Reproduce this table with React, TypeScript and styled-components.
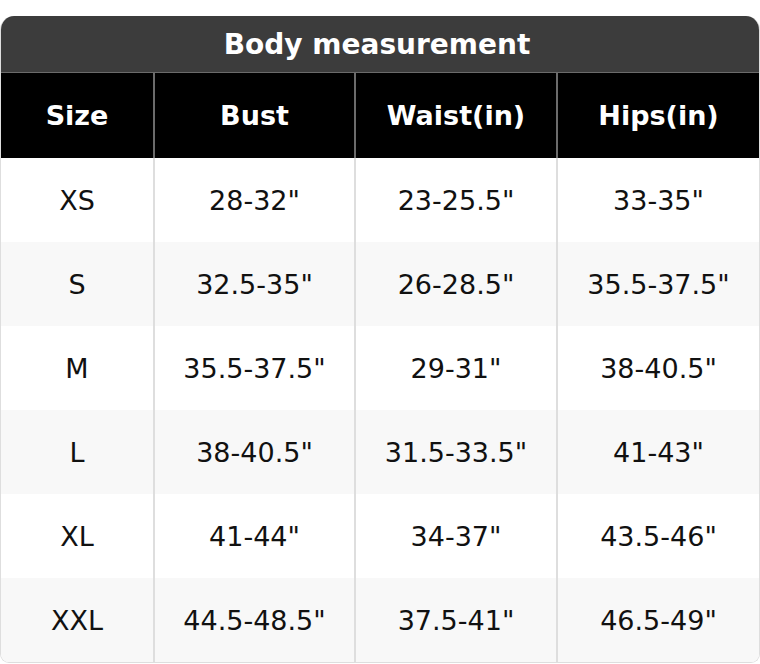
import React from "react";
import styled, { createGlobalStyle } from "styled-components";

const GlobalStyle = createGlobalStyle`
  html, body {
    margin: 0;
    padding: 0;
    background: #fff;
  }

  body {
    font-family: "DejaVu Sans", "Liberation Sans", sans-serif;
  }
`;

const Page = styled.div`
  width: 760px;
  padding-top: 16px;
`;

const Card = styled.div`
  border: 1px solid #dedede;
  border-top: none;
  border-radius: 14px 14px 9px 9px;
  overflow: hidden;
  background: #fff;
`;

const Title = styled.div`
  height: 56px;
  display: flex;
  align-items: center;
  justify-content: center;
  padding-right: 6px;

  background: #3c3c3c;
  border-bottom: 1px solid #6b6b6b;

  color: #fff;
  font-size: 28px;
  font-weight: bold;
`;

const Table = styled.table`
  width: 100%;
  border-collapse: separate;
  border-spacing: 0;
  table-layout: fixed;
`;

const HeadCell = styled.th<{ $width: number }>`
  box-sizing: border-box;
  width: ${(p) => p.$width}px;
  height: 85px;
  padding: 0;

  background: #000;
  color: #fff;
  font-size: 27px;
  font-weight: bold;
  text-align: center;

  border-left: 2px solid #6b6b6b;

  &:first-child {
    border-left: none;
  }
`;

const Row = styled.tr<{ $shaded: boolean }>`
  background: ${(p) => (p.$shaded ? "#f8f8f8" : "#fff")};
`;

const Cell = styled.td`
  box-sizing: border-box;
  height: 84px;
  padding: 0;

  color: #111;
  font-size: 27px;
  text-align: center;

  border-left: 2px solid #dedede;

  &:first-child {
    border-left: none;
  }
`;

const columns = [
  { label: "Size", width: 152 },
  { label: "Bust", width: 201 },
  { label: "Waist(in)", width: 202 },
  { label: "Hips(in)", width: 203 },
];

const rows = [
  ["XS", '28-32"', '23-25.5"', '33-35"'],
  ["S", '32.5-35"', '26-28.5"', '35.5-37.5"'],
  ["M", '35.5-37.5"', '29-31"', '38-40.5"'],
  ["L", '38-40.5"', '31.5-33.5"', '41-43"'],
  ["XL", '41-44"', '34-37"', '43.5-46"'],
  ["XXL", '44.5-48.5"', '37.5-41"', '46.5-49"'],
];

const App: React.FC = () => {
  return (
    <>
      <GlobalStyle />
      <Page>
        <Card>
          <Title>Body measurement</Title>
          <Table>
            <thead>
              <tr>
                {columns.map((c) => (
                  <HeadCell key={c.label} $width={c.width}>
                    {c.label}
                  </HeadCell>
                ))}
              </tr>
            </thead>
            <tbody>
              {rows.map((r, i) => (
                <Row key={r[0]} $shaded={i % 2 === 1}>
                  {r.map((v, j) => (
                    <Cell key={j}>{v}</Cell>
                  ))}
                </Row>
              ))}
            </tbody>
          </Table>
        </Card>
      </Page>
    </>
  );
};

export default App;
